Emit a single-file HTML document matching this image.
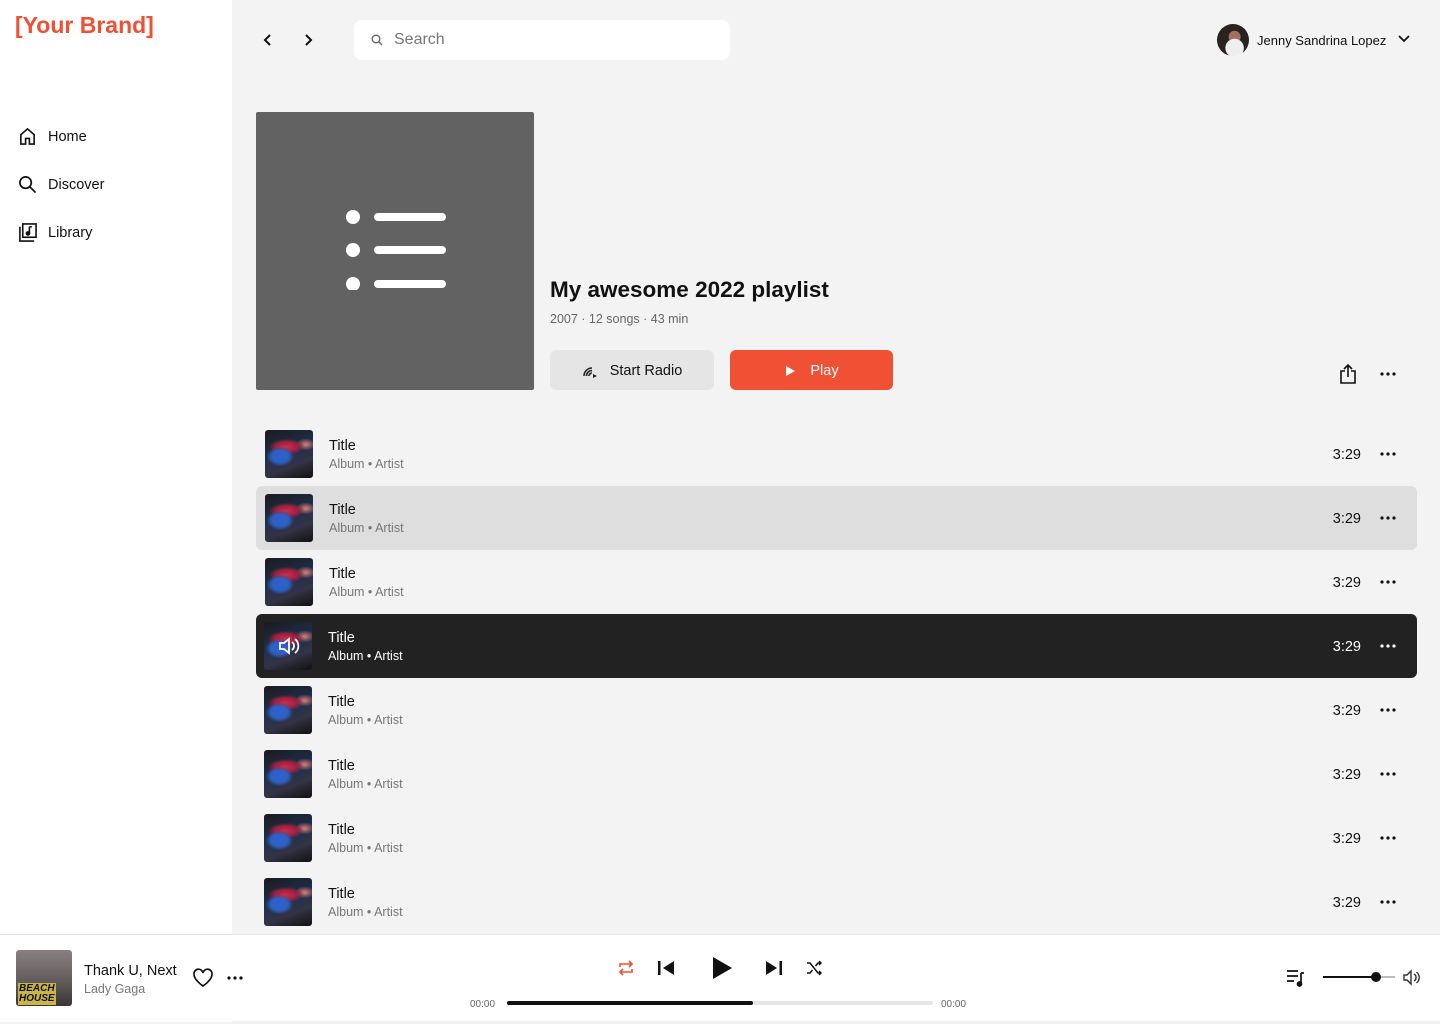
<!DOCTYPE html>
<html><head><meta charset="utf-8"><style>
*{margin:0;padding:0;box-sizing:border-box}
body{width:1440px;height:1024px;position:relative;overflow:hidden;background:#f3f3f3;font-family:"Liberation Sans",sans-serif;color:#111}
.abs{position:absolute}
.side{left:0;top:0;width:232px;height:934px;background:#fff}
.brand{left:15px;top:12px;color:#f05034;font-size:23px;font-weight:bold}
.nav{left:18px;font-size:14.5px;display:flex;align-items:center}
.nav svg{margin-right:11px}
.search{left:354px;top:20px;width:376px;height:40px;background:#fff;border-radius:8px;display:flex;align-items:center;padding-left:17px;color:#777;font-size:16px}
.cover{left:256px;top:112px;width:278px;height:278px;background:#626262;border-radius:2px}
.row{left:256px;width:1161px;height:64px;border-radius:6px}
.thumb{position:absolute;left:9px;top:8px;width:48px;height:48px;border-radius:3px;background:
radial-gradient(ellipse 14px 10px at 32% 55%,#2d5fd8 0,#3060c0 60%,transparent 100%),
radial-gradient(ellipse 18px 8px at 45% 35%,#c8304a 0,#a02040 60%,transparent 100%),
radial-gradient(ellipse 10px 6px at 85% 30%,#e08070 0,transparent 100%),
linear-gradient(160deg,#1a1a1a 0%,#203050 45%,#334 70%,#111 100%)}
.t{position:absolute;left:73px;top:16px;font-size:14.5px}
.s{position:absolute;left:73px;top:35px;font-size:12.5px;color:#777}
.d{position:absolute;right:56px;top:25px;font-size:14.5px}
.m{position:absolute;right:21px;top:30px}
.dark{background:#222}.dark .t,.dark .s,.dark .d{color:#fff}
.dark .m circle{fill:#fff}
.hl{background:#dedede}
.player{left:0;top:934px;width:1440px;height:88px;background:#fff;border-top:1px solid #e6e6e6}
</style></head><body>
<div class="abs side"></div>
<div class="abs brand">[Your Brand]</div>
<div class="abs nav" style="top:127px"><svg width="19" height="19" viewBox="0 0 20 20" fill="none" stroke="#111" stroke-width="1.7"><path d="M3 18V8l7-6 7 6v10h-5v-6H8v6z"/></svg>Home</div>
<div class="abs nav" style="top:175px"><svg width="19" height="19" viewBox="0 0 20 20" fill="none" stroke="#111" stroke-width="1.8"><circle cx="8" cy="8" r="6"/><path d="M12.5 12.5l6 6"/></svg>Discover</div>
<div class="abs nav" style="top:223px"><svg width="19" height="19" viewBox="0 0 20 20" fill="none" stroke="#111" stroke-width="1.7"><rect x="5" y="1" width="14" height="14"/><path d="M2 4v15h15"/><path d="M12 4v7" /><circle cx="10.5" cy="11" r="1.6" fill="#111"/><path d="M12 4h2.5"/></svg>Library</div>

<svg class="abs" style="left:262px;top:33px" width="12" height="14" viewBox="0 0 12 14" fill="none" stroke="#111" stroke-width="2"><path d="M8 2L3 7l5 5"/></svg>
<svg class="abs" style="left:302px;top:33px" width="12" height="14" viewBox="0 0 12 14" fill="none" stroke="#111" stroke-width="2"><path d="M4 2l5 5-5 5"/></svg>
<div class="abs search"><svg width="12" height="12" viewBox="0 0 12 12" fill="none" stroke="#666" stroke-width="1.4" style="margin-right:11px"><circle cx="5" cy="5" r="3.8"/><path d="M8 8l3 3"/></svg>Search</div>
<div class="abs" style="left:1217px;top:24px;width:32px;height:32px;border-radius:50%;background:radial-gradient(circle at 55% 75%,#eee 0 30%,transparent 32%),radial-gradient(circle at 55% 40%,#a07060 0 22%,transparent 24%),#2a2220"></div>
<div class="abs" style="left:1257px;top:33px;font-size:13px">Jenny Sandrina Lopez</div>
<svg class="abs" style="left:1397px;top:34px" width="14" height="10" viewBox="0 0 14 10" fill="none" stroke="#111" stroke-width="1.8"><path d="M2 2l5 5 5-5"/></svg>

<div class="abs cover"><svg style="position:absolute;left:88px;top:96px" width="102" height="82" viewBox="0 0 102 82"><g fill="#fff"><circle cx="9" cy="9" r="7"/><circle cx="9" cy="42" r="7"/><circle cx="9" cy="76" r="7"/></g><g stroke="#fff" stroke-width="8" stroke-linecap="round"><path d="M34 9h64M34 42h64M34 76h64"/></g></svg></div>
<div class="abs" style="left:550px;top:277px;font-size:22.5px;font-weight:bold">My awesome 2022 playlist</div>
<div class="abs" style="left:550px;top:312px;font-size:12.5px;color:#666">2007 · 12 songs · 43 min</div>
<div class="abs" style="left:550px;top:350px;width:164px;height:40px;background:#e5e5e5;border-radius:6px;display:flex;align-items:center;justify-content:center;font-size:14.5px;padding-top:1px"><svg width="16" height="16" viewBox="0 0 16 16" fill="none" stroke="#222" stroke-width="1.6" style="margin-right:12px"><path d="M2 13a8 8 0 0 1 8-8M4.5 13a5.5 5.5 0 0 1 5.5-5.5M7 13a3 3 0 0 1 3-3"/><path d="M11 11l4 2-4 2z" fill="#222" stroke="none"/></svg>Start Radio</div>
<div class="abs" style="left:730px;top:350px;width:163px;height:40px;background:#f05034;border-radius:6px;display:flex;align-items:center;justify-content:center;font-size:14.5px;color:#fff;padding-top:1px"><svg width="12" height="12" viewBox="0 0 12 12" style="margin-right:14px"><path d="M2 1l9 5-9 5z" fill="#fff"/></svg>Play</div>
<svg class="abs" style="left:1339px;top:363px" width="18" height="22" viewBox="0 0 18 22" fill="none" stroke="#111" stroke-width="1.6"><path d="M6 8H2v12h14V8h-4M9 14V2M5 6l4-4 4 4"/></svg>
<svg class="abs" style="left:1380px;top:372px" width="16" height="4" viewBox="0 0 16 4"><g fill="#111"><circle cx="2" cy="2" r="1.6"/><circle cx="8" cy="2" r="1.6"/><circle cx="14" cy="2" r="1.6"/></g></svg>

<div class="abs row" style="top:422px"><div class="thumb"></div><div class="t">Title</div><div class="s">Album • Artist</div><div class="d">3:29</div><svg class="m" width="16" height="4" viewBox="0 0 16 4"><g fill="#111"><circle cx="2" cy="2" r="1.6"/><circle cx="8" cy="2" r="1.6"/><circle cx="14" cy="2" r="1.6"/></g></svg></div>
<div class="abs row hl" style="top:486px"><div class="thumb"></div><div class="t">Title</div><div class="s">Album • Artist</div><div class="d">3:29</div><svg class="m" width="16" height="4" viewBox="0 0 16 4"><g fill="#111"><circle cx="2" cy="2" r="1.6"/><circle cx="8" cy="2" r="1.6"/><circle cx="14" cy="2" r="1.6"/></g></svg></div>
<div class="abs row" style="top:550px"><div class="thumb"></div><div class="t">Title</div><div class="s">Album • Artist</div><div class="d">3:29</div><svg class="m" width="16" height="4" viewBox="0 0 16 4"><g fill="#111"><circle cx="2" cy="2" r="1.6"/><circle cx="8" cy="2" r="1.6"/><circle cx="14" cy="2" r="1.6"/></g></svg></div>
<div class="abs row dark" style="top:614px"><div class="thumb" style="left:8px"></div><svg style="position:absolute;left:22px;top:22px" width="22" height="20" viewBox="0 0 22 20" fill="none" stroke="#fff" stroke-width="1.8"><path d="M2 7h4l5-4v14l-5-4H2z"/><path d="M14 6a5 5 0 0 1 0 8M17 3a9 9 0 0 1 0 14"/></svg><div class="t" style="left:72px">Title</div><div class="s" style="left:72px">Album • Artist</div><div class="d">3:29</div><svg class="m" width="16" height="4" viewBox="0 0 16 4"><g><circle cx="2" cy="2" r="1.6"/><circle cx="8" cy="2" r="1.6"/><circle cx="14" cy="2" r="1.6"/></g></svg></div>
<div class="abs row" style="top:678px"><div class="thumb" style="left:8px"></div><div class="t" style="left:72px">Title</div><div class="s" style="left:72px">Album • Artist</div><div class="d">3:29</div><svg class="m" width="16" height="4" viewBox="0 0 16 4"><g fill="#111"><circle cx="2" cy="2" r="1.6"/><circle cx="8" cy="2" r="1.6"/><circle cx="14" cy="2" r="1.6"/></g></svg></div>
<div class="abs row" style="top:742px"><div class="thumb" style="left:8px"></div><div class="t" style="left:72px">Title</div><div class="s" style="left:72px">Album • Artist</div><div class="d">3:29</div><svg class="m" width="16" height="4" viewBox="0 0 16 4"><g fill="#111"><circle cx="2" cy="2" r="1.6"/><circle cx="8" cy="2" r="1.6"/><circle cx="14" cy="2" r="1.6"/></g></svg></div>
<div class="abs row" style="top:806px"><div class="thumb" style="left:8px"></div><div class="t" style="left:72px">Title</div><div class="s" style="left:72px">Album • Artist</div><div class="d">3:29</div><svg class="m" width="16" height="4" viewBox="0 0 16 4"><g fill="#111"><circle cx="2" cy="2" r="1.6"/><circle cx="8" cy="2" r="1.6"/><circle cx="14" cy="2" r="1.6"/></g></svg></div>
<div class="abs row" style="top:870px"><div class="thumb" style="left:8px"></div><div class="t" style="left:72px">Title</div><div class="s" style="left:72px">Album • Artist</div><div class="d">3:29</div><svg class="m" width="16" height="4" viewBox="0 0 16 4"><g fill="#111"><circle cx="2" cy="2" r="1.6"/><circle cx="8" cy="2" r="1.6"/><circle cx="14" cy="2" r="1.6"/></g></svg></div>

<div class="abs player"></div>
<div class="abs" style="left:16px;top:950px;width:56px;height:56px;border-radius:3px;background:linear-gradient(180deg,#8a8282 0%,#5e5858 60%,#3a3636 100%)"><div style="position:absolute;left:2px;top:33px;background:#c9b64a;color:#111;font-size:10px;font-weight:bold;font-style:italic;line-height:10px;padding:1px">BEACH<br>HOUSE</div></div>
<div class="abs" style="left:84px;top:963px;font-size:14.5px">Thank U, Next</div>
<div class="abs" style="left:84px;top:982px;font-size:12.5px;color:#777">Lady Gaga</div>
<svg class="abs" style="left:192px;top:968px" width="22" height="20" viewBox="0 0 22 20" fill="none" stroke="#111" stroke-width="1.7"><path d="M11 18S2 12 2 6.5A4.5 4.5 0 0 1 11 5a4.5 4.5 0 0 1 9 1.5C20 12 11 18 11 18z"/></svg>
<svg class="abs" style="left:227px;top:976px" width="16" height="4" viewBox="0 0 16 4"><g fill="#111"><circle cx="2" cy="2" r="1.6"/><circle cx="8" cy="2" r="1.6"/><circle cx="14" cy="2" r="1.6"/></g></svg>

<svg class="abs" style="left:617px;top:959px" width="18" height="18" viewBox="0 0 18 18" fill="none" stroke="#f05034" stroke-width="1.6"><path d="M3 8V5h12M12 2l3 3-3 3M15 10v3H3M6 16l-3-3 3-3"/></svg>
<svg class="abs" style="left:657px;top:960px" width="18" height="16" viewBox="0 0 18 16"><rect x="1" y="1" width="2.5" height="14" fill="#111"/><path d="M17 1v14L6 8z" fill="#111"/></svg>
<svg class="abs" style="left:711px;top:956px" width="22" height="24" viewBox="0 0 22 24"><path d="M2 1l19 11L2 23z" fill="#111"/></svg>
<svg class="abs" style="left:765px;top:960px" width="18" height="16" viewBox="0 0 18 16"><path d="M1 1v14l11-7z" fill="#111"/><rect x="14.5" y="1" width="2.5" height="14" fill="#111"/></svg>
<svg class="abs" style="left:806px;top:960px" width="16" height="16" viewBox="0 0 16 16" fill="none" stroke="#111" stroke-width="1.5"><path d="M1 3h3l8 10h3M1 13h3l2.5-3M9.5 6L12 3h3M13 1l2 2-2 2M13 11l2 2-2 2"/></svg>
<div class="abs" style="left:470px;top:999px;font-size:10px;color:#666">00:00</div>
<div class="abs" style="left:507px;top:1001px;width:426px;height:4px;background:#e6e6e6;border-radius:2px"><div style="width:246px;height:4px;background:#111;border-radius:2px"></div></div>
<div class="abs" style="left:941px;top:999px;font-size:10px;color:#666">00:00</div>

<svg class="abs" style="left:1286px;top:969px" width="20" height="18" viewBox="0 0 20 18" fill="none" stroke="#111" stroke-width="1.7"><path d="M1 2h11M1 7h11M1 12h7M15 4v11"/><circle cx="13.5" cy="15" r="2" fill="#111"/><path d="M15 4h3"/></svg>
<div class="abs" style="left:1323px;top:976px;width:72px;height:2px;background:#bbb"><div style="width:52px;height:2px;background:#111"></div></div>
<div class="abs" style="left:1371px;top:972px;width:10px;height:10px;border-radius:50%;background:#111"></div>
<svg class="abs" style="left:1403px;top:969px" width="18" height="17" viewBox="0 0 18 17" fill="none" stroke="#333" stroke-width="1.4"><path d="M1 6h3l4-4v13l-4-4H1z"/><path d="M11 5a4 4 0 0 1 0 7M13.5 3a7 7 0 0 1 0 11"/></svg>
<div class="abs" style="left:232px;top:1021px;width:1208px;height:3px;background:#f0f0f0"></div>
</body></html>
